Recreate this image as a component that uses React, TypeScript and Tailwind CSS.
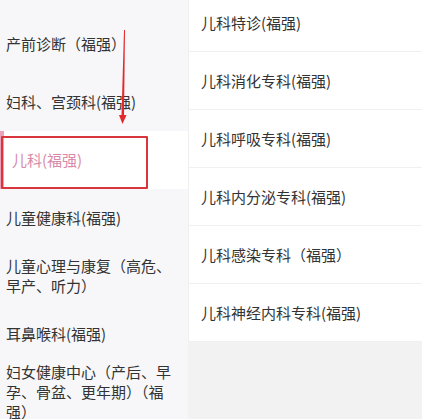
import React from "react";

const leftItems = [
  "产前诊断（福强）",
  "妇科、宫颈科(福强)",
  "儿科(福强)",
  "儿童健康科(福强)",
  "儿童心理与康复（高危、早产、听力）",
  "耳鼻喉科(福强)",
  "妇女健康中心（产后、早孕、骨盆、更年期）（福强）",
];

const rightItems = [
  "儿科特诊(福强)",
  "儿科消化专科(福强)",
  "儿科呼吸专科(福强)",
  "儿科内分泌专科(福强)",
  "儿科感染专科（福强）",
  "儿科神经内科专科(福强)",
];

const ACTIVE = 2;

export default function App() {
  return (
    <div
      className="relative w-[422px] h-[419px] overflow-hidden flex bg-[#f2f2f2] text-[15px] leading-[20px] text-[#333333]"
      style={{ fontFamily: '"Noto Sans CJK SC", "Noto Sans", sans-serif' }}
    >
      {/* department list */}
      <div className="w-[188px] shrink-0 bg-[#f7f7f9] pt-[15px]">
        {leftItems.map((name, i) => (
          <div
            key={name}
            className={
              i === ACTIVE
                ? "relative h-[58px] flex items-center pl-[12px] pr-[12px] bg-white text-[#d98aa8]"
                : "h-[58px] flex items-center pl-[6px] pr-[12px]"
            }
          >
            {i === ACTIVE && (
              <span className="absolute left-0 top-0 bottom-0 w-[4px] bg-[#eba2ba]" />
            )}
            <span>{name}</span>
          </div>
        ))}
      </div>

      {/* sub departments */}
      <div className="flex-1 self-start bg-white border-l border-[#efefef] -mt-[6px]">
        {rightItems.map((name) => (
          <div
            key={name}
            className="h-[58px] flex items-center pl-[12px] border-b border-[#f0f0f0]"
          >
            {name}
          </div>
        ))}
      </div>

      {/* annotation box */}
      <div className="absolute left-[1px] top-[136px] w-[147px] h-[53px] border-2 border-[#d8353c] rounded-[1px]" />

      {/* annotation arrow */}
      <svg className="absolute left-0 top-0 pointer-events-none" width="422" height="419">
        <polygon points="124,30 125,30 124,116 121.5,116" fill="#e3282c" />
        <polygon points="119,115 126.5,115 122.5,124" fill="#e3282c" />
      </svg>
    </div>
  );
}
